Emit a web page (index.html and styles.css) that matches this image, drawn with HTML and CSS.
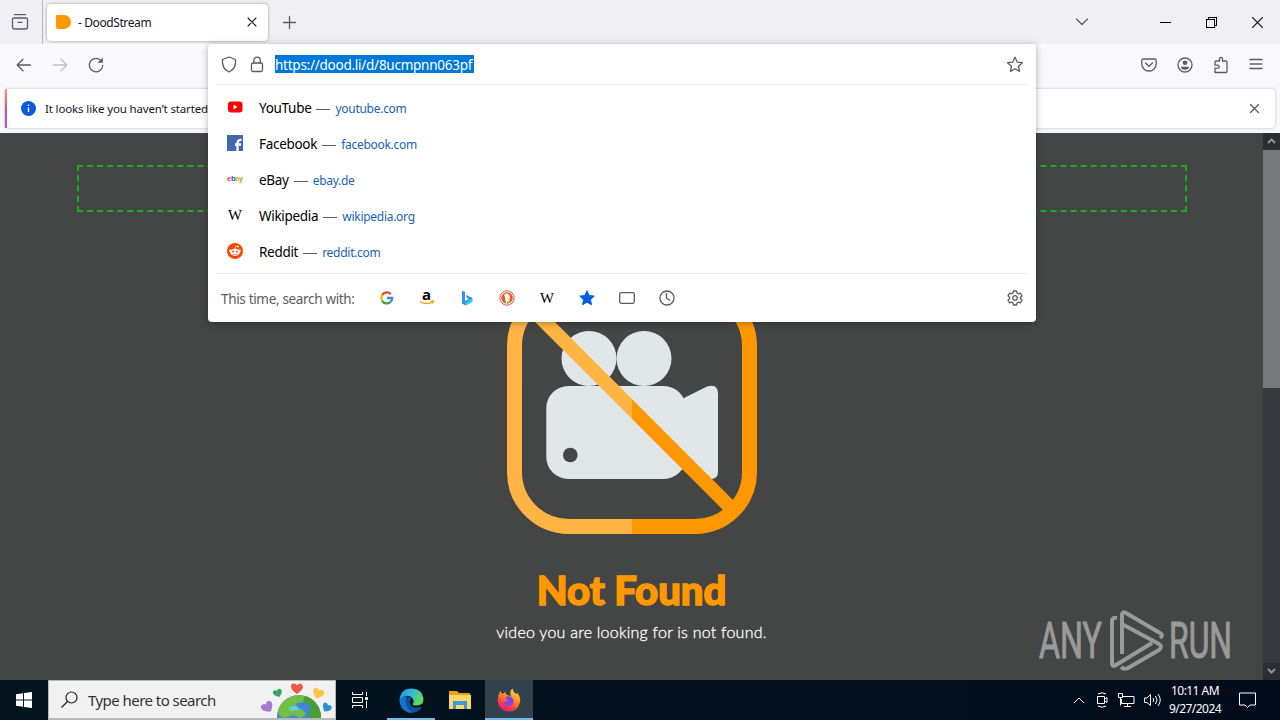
FILE: index.html
```html
<!DOCTYPE html>
<html lang="en">
<head>
    <meta charset="UTF-8">
    <meta name="viewport" content="width=device-width, initial-scale=1.0">
    <title>- DoodStream</title>
    <link rel="stylesheet" href="styles.css">
</head>
<body>
    <!-- Browser window -->
    <div class="browser">
        <header class="tab-bar">
            <div class="firefox-view">
                <svg class="line" width="18" height="18" viewBox="0 0 18 18"><path d="M3.500 1.700h11M3 5h12q1.500 0 1.500 1.500V14q0 2-2 2h-11q-2 0-2-2V6.500Q1.500 5 3 5zM7 9.300h4"/></svg>
            </div>
            <div class="tab">
                <svg width="15" height="15" viewBox="0 0 15 15"><path fill="#ff9800" d="M1 0h7a7 7 0 0 1 0 14H2q-2 0-2-2V1q0-1 1-1z"/></svg>
                <span class="tab-title">- DoodStream</span>
                <svg class="line dark" width="10" height="10" viewBox="0 0 10 10"><path d="M1 1l8 8M9 1l-8 8"/></svg>
            </div>
            <svg class="line new-tab" width="13" height="13" viewBox="0 0 13 13"><path d="M6.500 .5v12M.5 6.500h12"/></svg>
            <div class="window-buttons">
                <svg class="line tabs-list" width="14" height="8" viewBox="0 0 14 8"><path d="M1.500 1l5.500 5.500L12.500 1"/></svg>
                <svg class="crisp" width="11" height="11" viewBox="0 0 11 11"><path d="M0 5.500h11"/></svg>
                <svg class="crisp" width="11" height="11" viewBox="0 0 11 11"><path d="M.5 2.500h8v8h-8zM2.500 2.500v-2h8v8h-2"/></svg>
                <svg class="line dark" width="11" height="11" viewBox="0 0 11 11"><path d="M.5.5l10 10M10.500.5l-10 10"/></svg>
            </div>
        </header>

        <nav class="nav-bar">
            <div class="nav-left">
                <svg class="line" width="16" height="14" viewBox="0 0 16 14"><path d="M14.500 7H1.200M7 1.200L1.200 7 7 12.800"/></svg>
                <svg class="line faded" width="16" height="14" viewBox="0 0 16 14"><path d="M1.500 7h13.300M9 1.200L14.800 7 9 12.800"/></svg>
                <svg class="line" width="16" height="16" viewBox="0 0 16 16"><path d="M13.300 4A6.700 6.700 0 1 0 14.700 8.500"/><path class="fill" d="M14.800.5v5.300H9.500z"/></svg>
            </div>
            <div class="nav-right">
                <svg class="line" width="16" height="14" viewBox="0 0 16 14"><path d="M2.300 1h11.400q1.500 0 1.500 1.500V6a7.200 7 0 0 1-14.400 0V2.500Q.8 1 2.300 1zM4.500 5L8 8.200 11.500 5"/></svg>
                <svg class="line" width="16" height="16" viewBox="0 0 16 16"><circle cx="8" cy="8" r="7"/><circle class="fill" cx="8" cy="5.800" r="2.300"/><path class="fill" d="M4 9.800h8q0 3-4 3t-4-3z"/></svg>
                <svg class="line" width="16" height="18" viewBox="0 0 16 18"><path d="M2 16.500v-4.300h2.500q1.700 0 1.700-1.500T4.500 9.200H2V6q0-1 1-1h3.500V3q0-1.700 1.500-1.700T9.500 3v2H13q1 0 1 1v9.500q0 1-1 1z"/></svg>
                <svg class="line" width="14" height="12" viewBox="0 0 14 12"><path d="M1 .5h12M1 5h12M1 9.500h12"/></svg>
            </div>
        </nav>

        <div class="notice-row">
            <div class="notice">
                <svg width="15" height="15" viewBox="0 0 15 15"><circle cx="7.500" cy="7.500" r="7.500" fill="#0a5bdc"/><path d="M7.500 6.500V11M7.500 3.500v1.600" stroke="#fff" stroke-width="1.400"/></svg>
                <span class="notice-text">It looks like you haven’t started</span>
                <svg class="line" width="9" height="9" viewBox="0 0 9 9"><path d="M.5.5l8 8M8.500.5l-8 8"/></svg>
            </div>
        </div>

        <div class="viewport">
            <main class="page">
                <div class="ad-box"></div>
                <svg class="no-video" width="250" height="250" viewBox="0 0 250 250">
                    <defs>
                        <linearGradient id="split" gradientUnits="userSpaceOnUse" x2="250"><stop offset=".5" stop-color="#ffb444"/><stop offset=".5" stop-color="#ff9800"/></linearGradient>
                    </defs>
                    <g fill="#e1e6e9">
                        <circle cx="82" cy="74.500" r="27.500"/>
                        <circle cx="137" cy="74.500" r="27.500"/>
                        <rect x="39.300" y="102" width="139.500" height="93" rx="22"/>
                        <path d="M165 120l12-6 23-11.500q11-3 11 7V188q0 7-7 7l-30-10z"/>
                    </g>
                    <circle cx="63.300" cy="171" r="7.300" fill="#434645"/>
                    <g fill="none" stroke="url(#split)">
                        <rect x="7.500" y="7.500" width="235" height="235" rx="54.500" stroke-width="15"/>
                        <path d="M25 25L225 225" stroke-width="14"/>
                    </g>
                </svg>
                <h1>Not Found</h1>
                <p>video you are looking for is not found.</p>
                <svg class="watermark" width="196" height="64" viewBox="0 0 196 64">
                    <text x="1" y="49" textLength="63" lengthAdjust="spacingAndGlyphs">ANY</text>
                    <text x="131" y="49" textLength="63" lengthAdjust="spacingAndGlyphs">RUN</text>
                    <path d="M79 9q-5-1-5 3v43q1 3 4 1l36-22M84 45V6q0-4 4-2l34 20q4 2 0 5M84 15l37 20q4 3 0 6L90 59q-4 2-7-1"/>
                </svg>
            </main>
            <div class="scrollbar">
                <svg width="9" height="6" viewBox="0 0 9 6"><path d="M1 5l3.500-3.500L8 5"/></svg>
                <div class="thumb"></div>
                <svg width="9" height="6" viewBox="0 0 9 6"><path d="M1 1l3.500 3.500L8 1"/></svg>
            </div>
        </div>

        <!-- Address bar dropdown -->
        <div class="urlbar">
            <div class="url-input">
                <svg class="line" width="16" height="17" viewBox="0 0 16 17"><path d="M8 1l6.500 2.500q1 9-6.500 12.500Q.5 12.500 1.500 3.500z"/></svg>
                <svg class="line lock" width="14" height="17" viewBox="0 0 14 17"><rect x="1.500" y="7" width="11" height="8.500" rx="1.500"/><path d="M3.700 7V4.500a3.300 3.300 0 0 1 6.600 0V7"/></svg>
                <span class="url">https://dood.li/d/8ucmpnn063pf</span>
                <svg class="line star" width="18" height="17" viewBox="0 0 18 17"><path d="M9 1.300l2.200 4.800 5.200.6-3.900 3.500 1.100 5.200L9 12.800l-4.600 2.600 1.100-5.200-3.900-3.500 5.200-.6z"/></svg>
            </div>
            <ul class="results">
                <li>
                    <svg width="16" height="16" viewBox="0 0 16 16"><rect x="1" y="2.500" width="14.500" height="11" rx="3" fill="#f00"/><path d="M6.500 5.500v5l4-2.500z" fill="#fff"/></svg>
                    <span class="name">YouTube</span><i></i><a>youtube.com</a>
                </li>
                <li>
                    <svg width="16" height="16" viewBox="0 0 16 16"><path fill="#4267b2" d="M0 0h16v16H0z"/><path d="M10.500 16V8.500q0-4 4-3.500M8 9.500h6" stroke="#fff" stroke-width="2.300" fill="none"/></svg>
                    <span class="name">Facebook</span><i></i><a>facebook.com</a>
                </li>
                <li>
                    <svg width="16" height="16" viewBox="0 0 16 16"><text class="ebay" x="0" y="10"><tspan fill="#e53238">e</tspan><tspan fill="#0064d2">b</tspan><tspan fill="#f5af02">a</tspan><tspan fill="#86b817">y</tspan></text></svg>
                    <span class="name">eBay</span><i></i><a>ebay.de</a>
                </li>
                <li>
                    <svg width="16" height="16" viewBox="0 0 16 16"><text class="wiki" x="1" y="13" textLength="14" lengthAdjust="spacingAndGlyphs">W</text></svg>
                    <span class="name">Wikipedia</span><i></i><a>wikipedia.org</a>
                </li>
                <li>
                    <svg width="16" height="16" viewBox="0 0 16 16"><circle cx="8" cy="8" r="8" fill="#ff4500"/><g fill="#fff"><ellipse cx="8" cy="9.300" rx="4.800" ry="3.600"/><circle cx="3.500" cy="7.700" r="1.300"/><circle cx="12.500" cy="7.700" r="1.300"/><circle cx="11" cy="3.500" r="1"/></g><path d="M8 6l.7-3 2.300.5" stroke="#fff" stroke-width=".7" fill="none"/><g fill="#ff4500"><circle cx="6.200" cy="8.600" r="1"/><circle cx="9.800" cy="8.600" r="1"/></g><path d="M6 11q2 1.200 4 0" stroke="#ff4500" stroke-width=".7" fill="none"/></svg>
                    <span class="name">Reddit</span><i></i><a>reddit.com</a>
                </li>
            </ul>
            <div class="engines">
                <span class="engines-label">This time, search with:</span>
                <svg width="16" height="16" viewBox="0 0 16 16" fill="none" stroke-width="2.300"><path d="M3.200 5.200A5.300 5.300 0 0 1 11.800 4.200" stroke="#ea4335"/><path d="M3.200 5.200a5.300 5.300 0 0 0 0 5.600" stroke="#fbbc05"/><path d="M3.200 10.800a5.300 5.300 0 0 0 8 1.400" stroke="#34a853"/><path d="M8 8h5.200q0 2.800-2 4.200" stroke="#4285f4"/></svg>
                <svg width="16" height="16" viewBox="0 0 16 16"><text class="amazon" x="3" y="10">a</text><path d="M1 11.500q6.500 4 12.500.5M11.500 11.300l3-.3-1 2.500" stroke="#f90" stroke-width="1.200" fill="none"/></svg>
                <svg width="16" height="16" viewBox="0 0 16 16"><path fill="#3292f4" d="M3 .5l3 1.500v9l4-2-2-1-1.200-3 6 2.500q1 1 .5 4L6.500 15.500 3 13.500z"/><path fill="#35c9ef" d="M6 13l7.300-4.500q.5 2-.5 3.500l-6.300 3.500z"/></svg>
                <svg width="16" height="16" viewBox="0 0 16 16"><circle cx="8" cy="8" r="7.200" fill="#fff" stroke="#de5833" stroke-width="1"/><circle cx="8" cy="8" r="5.800" fill="#de5833"/><path d="M5.300 4.500q2-2 4.300-.3 1.700 1.500 1 4.500l-.5 4.300-3 .5z" fill="#fff"/><path d="M8.300 8.300l3-.5v1.500l-3 .5z" fill="#fc3"/><path d="M8 11l2.500 1-2.500 1.500z" fill="#4cba3c"/></svg>
                <svg width="16" height="16" viewBox="0 0 16 16"><text class="wiki" x="1" y="13" textLength="14" lengthAdjust="spacingAndGlyphs">W</text></svg>
                <svg width="16" height="16" viewBox="0 0 16 16"><path fill="#0060df" stroke="#0060df" stroke-linejoin="round" d="M8 .8l2.200 4.700 5 .6-3.700 3.600 1 5L8 12.200l-4.500 2.500 1-5L.8 6.100l5-.6z"/></svg>
                <svg class="line" width="16" height="16" viewBox="0 0 16 16"><rect x=".7" y="2.700" width="14.600" height="10.600" rx="1.500"/></svg>
                <svg class="line" width="16" height="16" viewBox="0 0 16 16"><circle cx="8" cy="8" r="7"/><path d="M7.500 3.500v4.800l3.500 2"/></svg>
                <svg class="line gear" width="16" height="16" viewBox="0 0 16 16"><circle cx="8" cy="8" r="2.300"/><path d="M6.500 1h3l.5 2 1.500.9 2-.7 1.500 2.600L13.500 7.200v1.600l1.500 1.400-1.500 2.600-2-.7L10 13l-.5 2h-3L6 13l-1.500-.9-2 .7L1 10.200l1.500-1.400V7.200L1 5.800l1.500-2.600 2 .7L6 3z"/></svg>
            </div>
        </div>
    </div>

    <!-- Windows taskbar -->
    <footer class="taskbar">
        <div class="start">
            <svg width="16" height="16" viewBox="0 0 16 16" fill="#fff"><path d="M0 2.200l7-1v6.300H0zM8 1l8-1v7.500H8zM0 8.500h7v6.300l-7-1zM8 8.500h8V16l-8-1z"/></svg>
        </div>
        <div class="search">
            <svg width="17" height="17" viewBox="0 0 17 17" fill="none" stroke="#222" stroke-width="1.200"><circle cx="10.500" cy="6.500" r="5.500"/><path d="M6.500 10.500L.5 16.500"/></svg>
            <span class="search-text">Type here to search</span>
            <svg class="doodle" width="73" height="36" viewBox="0 0 73 36">
                <defs>
                    <path id="heart" d="M0 5Q-6 1-6-2.500T-3-5.500Q-1-5.500 0-3.500 1-5.500 3-5.500T6-2.500Q6 1 0 5z"/>
                    <clipPath id="globe"><circle cx="37" cy="35" r="22"/></clipPath>
                </defs>
                <circle cx="37" cy="35" r="22" fill="#3f87da"/>
                <g clip-path="url(#globe)"><path fill="#71c043" d="M15 28q5-14 21-15l9 1-3 6-7 1-3 5 8 1 4 5-5 4-8-3-8 3q-6-1-8-8z"/><path fill="#4b9d32" d="M43 13q15 4 17 23H48l-3-5 5-4-4-5-5-2z"/><path fill="#6ac8ef" d="M27 25l8-1 3 4-10 1z"/></g>
                <use href="#heart" x="35" y="7" fill="#ef5746"/>
                <use href="#heart" transform="translate(16 11.500) rotate(-20) scale(.75)" fill="#33a56b"/>
                <use href="#heart" transform="translate(56 12) rotate(20) scale(.95)" fill="#ffc43a"/>
                <use href="#heart" transform="translate(6 25.500) rotate(-35)" fill="#a77acd"/>
                <use href="#heart" transform="translate(64.500 26) rotate(30) scale(.8)" fill="#2b91d5"/>
            </svg>
        </div>
        <div class="task">
            <svg width="17" height="16" viewBox="0 0 17 16" fill="none" stroke="#fff"><path d="M.5 0v2.500h10V0M.5 5.500h10v5H.5zM.5 16v-2.500h10V16M14.500 0v4M14.500 9v7"/><path fill="#fff" d="M13.500 5.500h2v2h-2z"/></svg>
        </div>
        <div class="task open">
            <svg width="25" height="25" viewBox="0 0 25 25">
                <defs><linearGradient id="edge" x2="1" y2=".4"><stop stop-color="#1c91d5"/><stop offset=".5" stop-color="#2fb8df"/><stop offset="1" stop-color="#61d85b"/></linearGradient></defs>
                <path fill="#1276cb" d="M.5 12Q2 7 9 8.500q-3 2-1.500 6.500Q10 21 20 19.500q2-.5 2 .5-5 6-13 4.500Q.5 21 .5 12z"/>
                <path fill="#10509d" d="M10 8.500q-5 3-3 8.500 2 6 8 7.500 5-1 7.500-5-10 2.500-11.500-5-.5-3 1.500-4z"/>
                <path fill="url(#edge)" d="M.5 12Q1.500.5 12.500.5T24.500 11q0 6.500-7 6.500-4 0-4-1.500 2-2 .5-5Q11 7 6 8q-4 1-5.500 4z"/>
            </svg>
        </div>
        <div class="task">
            <svg width="22" height="20" viewBox="0 0 22 20"><path fill="#e9a319" d="M0 1h8l2 2h11v5H0z"/><path fill="#ffd765" d="M0 5h22v14H0z"/><path fill="#3d9bd9" d="M4 19v-8h14v8h-3v-4H7v4z"/></svg>
        </div>
        <div class="task active">
            <svg width="24" height="24" viewBox="0 0 24 24">
                <defs><linearGradient id="fox" x1=".8" x2=".3" y2="1"><stop stop-color="#ffe23c"/><stop offset=".4" stop-color="#ff9326"/><stop offset=".75" stop-color="#ff3b48"/><stop offset="1" stop-color="#e31587"/></linearGradient></defs>
                <path fill="url(#fox)" d="M3.500 3q.5 2 2 3l3-2q0 2 1.500 3l4 1Q12 3 15.500.5 16 4 19.500 6l1-1Q24 10 23 14q-2 9.500-11 9.500T.8 14Q0 8 3.500 3z"/>
                <path fill="#8148df" d="M9 8.500q6-1.500 7.500 3.500.5 5.500-4.500 6t-5.500-4q3 .5 4.500-1.500l-2-2z"/>
            </svg>
        </div>
        <div class="tray">
            <svg width="12" height="8" viewBox="0 0 12 8"><path d="M1 7l5-5 5 5"/></svg>
            <svg width="12" height="16" viewBox="0 0 12 16"><path d="M1.500 4.500h7v7h-7zM8.500 7l2.500-1.500v5L8.500 9M2 2q4-2.500 8 0M2 14q4 2.500 8 0"/></svg>
            <svg width="17" height="15" viewBox="0 0 17 15"><path d="M5 3.500h11v7H3.500V6M9.500 10.500v3M6 13.500h7M.5.500h4v4h-4zM2.500 4.500v8"/></svg>
            <svg width="17" height="14" viewBox="0 0 17 14"><path d="M.5 5v4.500h2.500L6.500 12.500V1.500L3 5zM9 5q1.500 2 0 4M11.500 3q3 4 0 8M14 1q4.500 6 0 12"/></svg>
            <div class="clock"><span>10:11 AM</span><span>9/27/2024</span></div>
            <svg class="messages" width="17" height="17" viewBox="0 0 17 17"><path d="M.5 1h16v12h-5.500l-2.500 2.500L6 13H.5z"/></svg>
        </div>
    </footer>
</body>
</html>
```
FILE: styles.css
```css
* {
    box-sizing: border-box;
}
body {
    margin: 0;
    width: 1280px;
    height: 720px;
    overflow: hidden;
    font-family: "Noto Sans", "Open Sans", sans-serif;
    font-size: 12px;
    color: #15141a;
}
svg {
    display: block;
    flex-shrink: 0;
    overflow: visible;
}
.line {
    fill: none;
    stroke: #5b5b66;
    stroke-width: 1.3;
    stroke-linecap: round;
    stroke-linejoin: round;
}
.line .fill {
    fill: #5b5b66;
    stroke: none;
}
.line.dark {
    stroke: #222;
    stroke-width: 1.1;
}
.line.faded {
    stroke: #bfbfc6;
}
.crisp {
    fill: none;
    stroke: #000;
    shape-rendering: crispEdges;
}
.browser {
    position: relative;
    height: 680px;
    display: flex;
    flex-direction: column;
}

/* Tabs */
.tab-bar {
    height: 44px;
    display: flex;
    align-items: center;
    background: #f0f0f4;
}
.firefox-view {
    width: 43px;
    height: 44px;
    padding: 13px 0 0 11px;
    border-right: 1px solid #b8b8bf;
}
.tab {
    width: 221px;
    height: 37px;
    margin-left: 4px;
    padding: 0 11px 0 9px;
    display: flex;
    align-items: center;
    background: #fff;
    border-radius: 4px;
    box-shadow: 0 0 3px rgba(0, 0, 0, 0.4);
}
.tab-title {
    flex: 1;
    margin-left: 7px;
    letter-spacing: -0.4px;
}
.new-tab {
    margin-left: 15px;
}
.window-buttons {
    margin-left: auto;
    padding-right: 17px;
    display: flex;
    align-items: center;
    gap: 35px;
}
.tabs-list {
    margin-right: 36px;
}

/* Toolbar */
.nav-bar {
    height: 41px;
    padding: 0 17px 0 16px;
    display: flex;
    justify-content: space-between;
    background: #f9f9fb;
}
.nav-left, .nav-right {
    height: 41px;
    display: flex;
    align-items: center;
    gap: 20px;
}
.notice-row {
    height: 48px;
    padding: 4px 5px 5px;
    background: #f9f9fb;
}
.notice {
    height: 39px;
    padding: 0 16px 0 14px;
    display: flex;
    align-items: center;
    background: #fff;
    border-radius: 4px;
    border-left: 2px solid;
    border-image: linear-gradient(#ff9a63, #d64f8c, #9059ff) 1;
    box-shadow: 0 0 3px rgba(0, 0, 0, 0.25);
}
.notice-text {
    flex: 1;
    margin-left: 9px;
    font-size: 11.5px;
    letter-spacing: -0.14px;
}

/* Web page */
.viewport {
    flex: 1;
    display: flex;
}
.page {
    position: relative;
    width: 1263px;
    padding-top: 32px;
    display: flex;
    flex-direction: column;
    align-items: center;
    background: #434645;
    font-family: Lato, sans-serif;
    color: #fff;
}
.ad-box {
    width: 1110px;
    height: 47px;
    border: 2px dashed #1cab1c;
}
.no-video {
    margin-top: 72px;
}
.page h1 {
    margin: 31px 0 0;
    font-size: 40px;
    line-height: 50px;
    font-weight: 900;
    color: #ff9800;
    -webkit-text-stroke: 1.5px #ff9800;
}
.page p {
    margin: 7px 0 0;
    font-size: 16px;
    line-height: 20px;
    font-weight: 300;
    letter-spacing: 0.24px;
    -webkit-text-stroke: 0.3px #fff;
}
.watermark {
    position: absolute;
    left: 1038px;
    top: 476px;
    fill: none;
    stroke: #a3a4a4;
    stroke-width: 4;
    stroke-linejoin: round;
    opacity: 0.9;
}
.watermark text {
    font-family: Roboto, sans-serif;
    font-size: 50px;
    fill: #a3a4a4;
    stroke-width: 1;
}
.scrollbar {
    width: 17px;
    display: flex;
    flex-direction: column;
    align-items: center;
    background: #35393f;
}
.scrollbar svg {
    width: 17px;
    height: 17px;
    padding: 5px 4px 6px;
    background: #2b2d32;
    fill: none;
    stroke: #909296;
    stroke-width: 2;
}
.thumb {
    width: 17px;
    height: 238px;
    margin-bottom: auto;
    background: #77797c;
}

/* Address bar dropdown */
.urlbar {
    position: absolute;
    left: 208px;
    top: 44px;
    width: 828px;
    height: 278px;
    padding: 0 8px;
    background: #fff;
    border-radius: 4px;
    box-shadow: 0 1px 7px rgba(0, 0, 0, 0.3);
}
.url-input {
    height: 41px;
    padding: 0 4px 0 5px;
    display: flex;
    align-items: center;
    border-bottom: 1px solid #ebebed;
}
.lock {
    margin-left: 13px;
}
.url {
    width: 199px;
    height: 18px;
    margin-left: 11px;
    line-height: 20px;
    font-size: 13.5px;
    white-space: nowrap;
    color: #fff;
    background: #0078d7;
    letter-spacing: -0.25px;
}
.star {
    margin-left: auto;
}
.results {
    height: 189px;
    margin: 0;
    padding: 5px 11px 0;
    list-style: none;
    border-bottom: 1px solid #ebebed;
}
.results li {
    height: 36px;
    display: flex;
    align-items: center;
}
.results svg {
    margin-top: -2px;
}
.name {
    margin-left: 16px;
    font-size: 13.5px;
    color: #000;
    letter-spacing: -0.3px;
}
.results i {
    width: 14px;
    margin: 2px 5px 0;
    border-top: 1px solid #5b5b66;
}
.results a {
    margin-top: 1px;
    font-size: 12px;
    color: #1a5fb8;
    letter-spacing: -0.28px;
}
.ebay {
    font: bold 7.5px "Liberation Sans", sans-serif;
    letter-spacing: -0.3px;
}
.wiki {
    font: 14px "Liberation Serif", serif;
}
.amazon {
    font: bold 15px "Open Sans", sans-serif;
}
.engines {
    height: 48px;
    padding: 0 5px;
    display: flex;
    align-items: center;
    gap: 24px;
}
.engines-label {
    width: 134px;
    padding-top: 2px;
    font-size: 13.5px;
    white-space: nowrap;
    color: #5b5b66;
    letter-spacing: -0.33px;
}
.gear {
    margin-left: auto;
}

/* Taskbar */
.taskbar {
    height: 40px;
    display: flex;
    background: linear-gradient(90deg, #02151f, #020b1b);
}
.start {
    width: 48px;
    padding: 12px 16px;
}
.search {
    width: 288px;
    padding: 0 0 0 12px;
    display: flex;
    align-items: center;
    background: #f1f1f1;
    border: 1px solid #b8b8b8;
    border-width: 1px 1px 2px;
    overflow: hidden;
}
.search-text {
    flex: 1;
    margin-left: 10px;
    font-size: 15px;
    color: #333;
    letter-spacing: -0.55px;
}
.task {
    width: 48px;
    margin-right: 3px;
    display: flex;
    align-items: center;
    justify-content: center;
}
.task + .task {
    margin-right: 1px;
}
.open {
    box-shadow: inset 0 -2px #76b9ed;
}
.active {
    background: #33434d;
    box-shadow: inset 0 -2px #76b9ed;
}
.tray {
    margin-left: auto;
    padding-right: 24px;
    display: flex;
    align-items: center;
    gap: 9px;
    color: #fff;
}
.tray svg {
    fill: none;
    stroke: #fff;
}
.tray svg:nth-child(2) {
    margin: 0 1px 0 2px;
}
.clock {
    width: 50px;
    display: flex;
    flex-direction: column;
    align-items: center;
    line-height: 18px;
    white-space: nowrap;
    letter-spacing: -0.55px;
}
.messages {
    margin-left: 10px;
}
```
